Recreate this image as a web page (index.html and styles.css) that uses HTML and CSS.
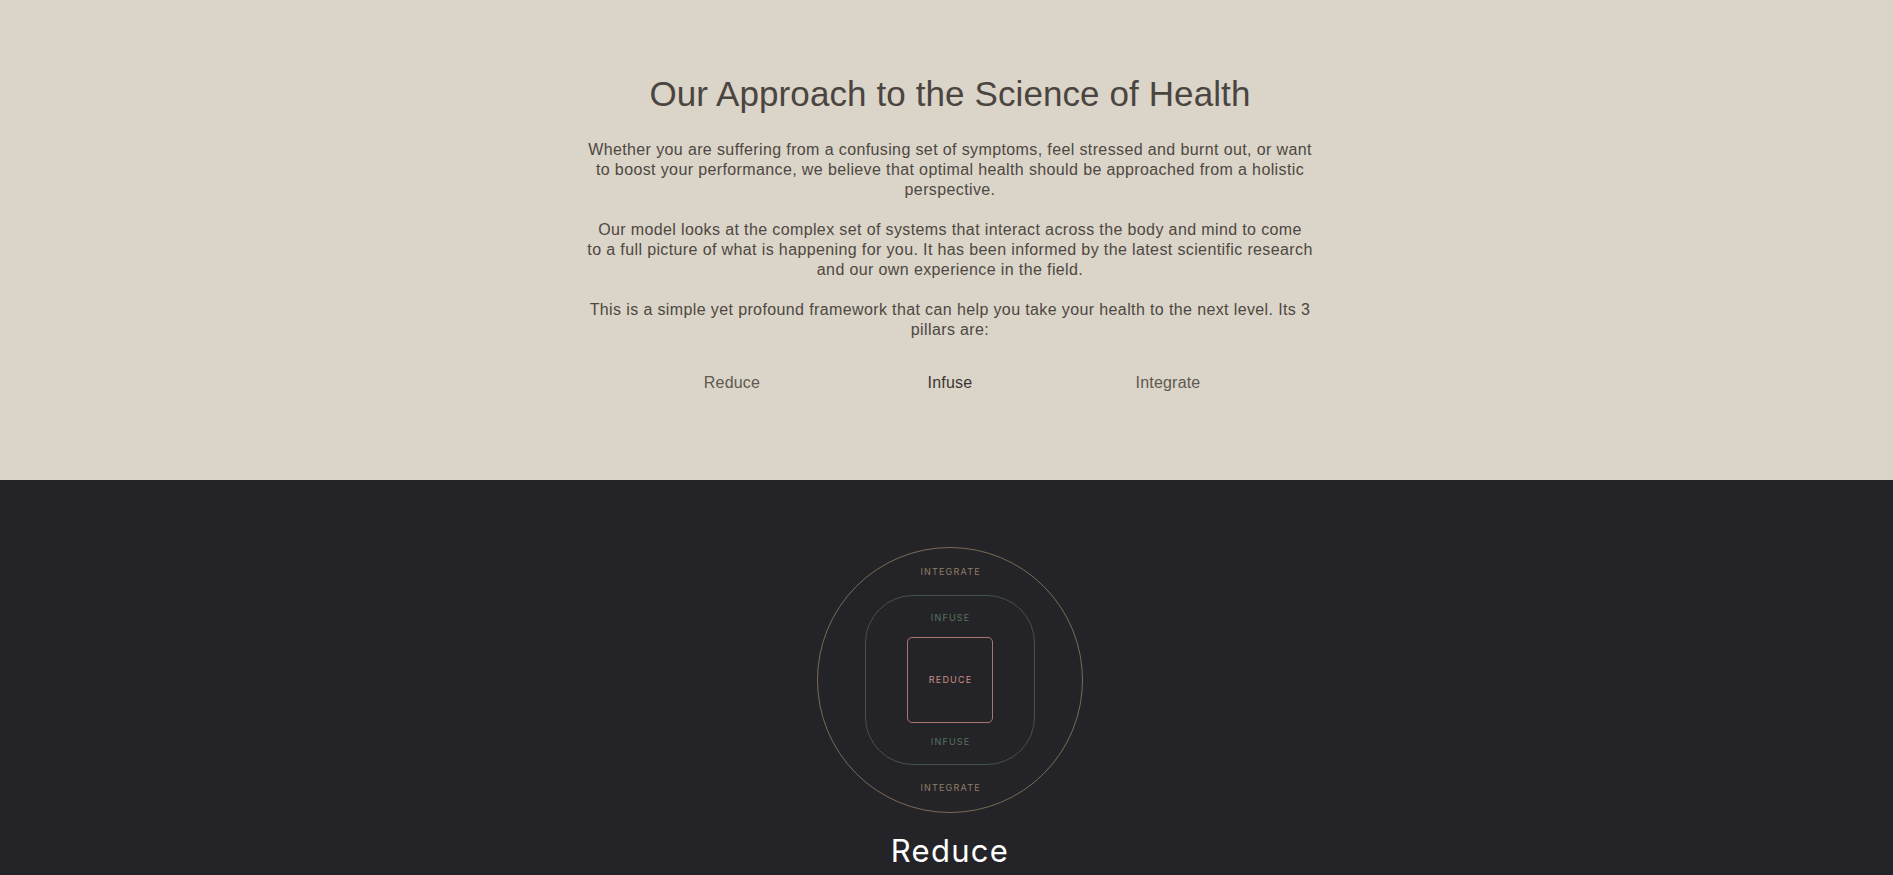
FILE: index.html
```html
<!DOCTYPE html>
<html lang="en">
<head>
<meta charset="utf-8">
<title>Our Approach to the Science of Health</title>
<link rel="stylesheet" href="styles.css">
</head>
<body>
<main class="page">
  <section class="intro">
    <h1 class="intro-title">Our Approach to the Science of Health</h1>
    <div class="intro-body">
      <p>Whether you are suffering from a confusing set of symptoms, feel stressed and burnt out, or want to boost your performance, we believe that optimal health should be approached from a holistic perspective.</p>
      <p>Our model looks at the complex set of systems that interact across the body and mind to come<br>to a full picture of what is happening for you. It has been informed by the latest scientific research and our own experience in the field.</p>
      <p>This is a simple yet profound framework that can help you take your health to the next level. Its 3 pillars are:</p>
    </div>
    <nav class="pillar-tabs">
      <span class="pillar-tab">Reduce</span>
      <span class="pillar-tab is-active">Infuse</span>
      <span class="pillar-tab">Integrate</span>
    </nav>
  </section>
  <section class="model">
    <div class="ring ring-integrate">
      <span class="ring-label label-integrate">INTEGRATE</span>
      <div class="ring ring-infuse">
        <span class="ring-label label-infuse">INFUSE</span>
        <div class="ring ring-reduce">
          <span class="ring-label label-reduce">REDUCE</span>
        </div>
        <span class="ring-label label-infuse">INFUSE</span>
      </div>
      <span class="ring-label label-integrate">INTEGRATE</span>
    </div>
    <h2 class="model-title">Reduce</h2>
  </section>
</main>
</body>
</html>
```

FILE: styles.css
```css
* { box-sizing: border-box; }
html, body { margin: 0; padding: 0; }
body {
  font-family: "Liberation Sans", Arial, sans-serif;
  background: #242428;
  overflow: hidden;
}
.page { display: flex; flex-direction: column; }

.intro {
  background: #dbd4c8;
  color: #4b4640;
  padding: 73px 0 0 7px;
  height: 480px;
  display: flex;
  flex-direction: column;
  align-items: center;
}
.intro-title {
  margin: 0;
  font-weight: 400;
  font-size: 35px;
  line-height: 41px;
  color: #4a4540;
  letter-spacing: 0.1px;
}
.intro-body {
  width: 732px;
  margin-top: 26px;
  text-align: center;
  font-size: 16px;
  line-height: 20px;
  letter-spacing: 0.38px;
  color: #4d4842;
}
.intro-body p { margin: 0 0 20px; }
.intro-body p:last-child { margin-bottom: 0; }

.pillar-tabs {
  margin-top: 33px;
  display: grid;
  grid-template-columns: repeat(3, 218px);
  font-size: 16px;
  line-height: 20px;
  text-align: center;
  letter-spacing: 0.2px;
}
.pillar-tab { color: #5f5952; }
.pillar-tab.is-active { color: #3a3530; }

.model {
  background: #242428;
  padding: 67px 0 0 7px;
  height: 395px;
  display: flex;
  flex-direction: column;
  align-items: center;
}
.ring {
  display: flex;
  flex-direction: column;
  align-items: center;
  justify-content: center;
  border: 1px solid;
}
.ring-integrate {
  width: 266px;
  height: 266px;
  border-radius: 50%;
  border-color: #7a6a55;
  gap: 17px;
}
.ring-infuse {
  width: 170px;
  height: 170px;
  border-radius: 48px;
  border-color: #44524a;
  gap: 13px;
}
.ring-reduce {
  width: 86px;
  height: 86px;
  border-radius: 5px;
  border-color: #a87673;
}
.ring-label {
  font-family: "Inter", "Liberation Sans", sans-serif;
  font-size: 9px;
  line-height: 12px;
  letter-spacing: 1.2px;
  padding-left: 1.2px;
}
.label-integrate { color: #927e63; }
.label-infuse { color: #56735d; }
.label-reduce { color: #c88e85; }

.model-title {
  margin: 19px 0 0;
  font-family: "Inter", "Liberation Sans", sans-serif;
  font-weight: 400;
  font-size: 31px;
  line-height: 38px;
  color: #ffffff;
  letter-spacing: 1.3px;
}
```
